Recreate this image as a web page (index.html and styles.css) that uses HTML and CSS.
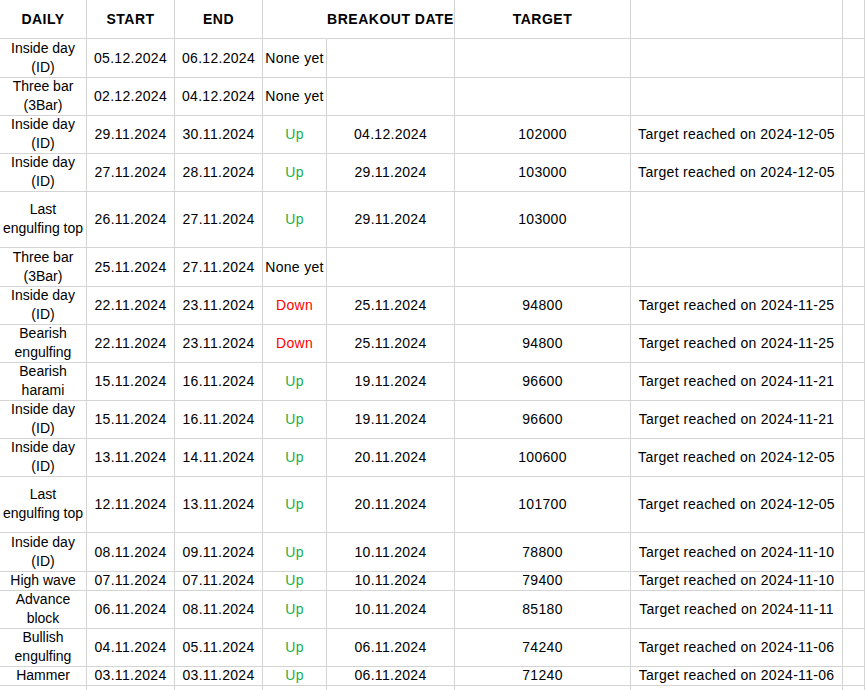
FILE: index.html
```html
<!DOCTYPE html>
<html>
<head>
<meta charset="utf-8">
<link rel="stylesheet" href="styles.css">
</head>
<body>
<div class="sheet">
  <div class="row head">
    <div class="c">DAILY</div>
    <div class="c">START</div>
    <div class="c">END</div>
    <div class="c nob"></div>
    <div class="c over">BREAKOUT DATE</div>
    <div class="c">TARGET</div>
    <div class="c"></div>
    <div class="c"></div>
  </div>

  <div class="row">
    <div class="c">Inside day (ID)</div><div class="c">05.12.2024</div><div class="c">06.12.2024</div><div class="c">None yet</div><div class="c"></div><div class="c"></div><div class="c"></div><div class="c"></div>
  </div>
  <div class="row">
    <div class="c">Three bar (3Bar)</div><div class="c">02.12.2024</div><div class="c">04.12.2024</div><div class="c">None yet</div><div class="c"></div><div class="c"></div><div class="c"></div><div class="c"></div>
  </div>
  <div class="row">
    <div class="c">Inside day (ID)</div><div class="c">29.11.2024</div><div class="c">30.11.2024</div><div class="c up">Up</div><div class="c">04.12.2024</div><div class="c">102000</div><div class="c">Target reached on 2024-12-05</div><div class="c"></div>
  </div>
  <div class="row">
    <div class="c">Inside day (ID)</div><div class="c">27.11.2024</div><div class="c">28.11.2024</div><div class="c up">Up</div><div class="c">29.11.2024</div><div class="c">103000</div><div class="c">Target reached on 2024-12-05</div><div class="c"></div>
  </div>
  <div class="row tall">
    <div class="c">Last engulfing top</div><div class="c">26.11.2024</div><div class="c">27.11.2024</div><div class="c up">Up</div><div class="c">29.11.2024</div><div class="c">103000</div><div class="c"></div><div class="c"></div>
  </div>
  <div class="row">
    <div class="c">Three bar (3Bar)</div><div class="c">25.11.2024</div><div class="c">27.11.2024</div><div class="c">None yet</div><div class="c"></div><div class="c"></div><div class="c"></div><div class="c"></div>
  </div>
  <div class="row">
    <div class="c">Inside day (ID)</div><div class="c">22.11.2024</div><div class="c">23.11.2024</div><div class="c down">Down</div><div class="c">25.11.2024</div><div class="c">94800</div><div class="c">Target reached on 2024-11-25</div><div class="c"></div>
  </div>
  <div class="row">
    <div class="c">Bearish engulfing</div><div class="c">22.11.2024</div><div class="c">23.11.2024</div><div class="c down">Down</div><div class="c">25.11.2024</div><div class="c">94800</div><div class="c">Target reached on 2024-11-25</div><div class="c"></div>
  </div>
  <div class="row">
    <div class="c">Bearish harami</div><div class="c">15.11.2024</div><div class="c">16.11.2024</div><div class="c up">Up</div><div class="c">19.11.2024</div><div class="c">96600</div><div class="c">Target reached on 2024-11-21</div><div class="c"></div>
  </div>
  <div class="row">
    <div class="c">Inside day (ID)</div><div class="c">15.11.2024</div><div class="c">16.11.2024</div><div class="c up">Up</div><div class="c">19.11.2024</div><div class="c">96600</div><div class="c">Target reached on 2024-11-21</div><div class="c"></div>
  </div>
  <div class="row">
    <div class="c">Inside day (ID)</div><div class="c">13.11.2024</div><div class="c">14.11.2024</div><div class="c up">Up</div><div class="c">20.11.2024</div><div class="c">100600</div><div class="c">Target reached on 2024-12-05</div><div class="c"></div>
  </div>
  <div class="row tall">
    <div class="c">Last engulfing top</div><div class="c">12.11.2024</div><div class="c">13.11.2024</div><div class="c up">Up</div><div class="c">20.11.2024</div><div class="c">101700</div><div class="c">Target reached on 2024-12-05</div><div class="c"></div>
  </div>
  <div class="row">
    <div class="c">Inside day (ID)</div><div class="c">08.11.2024</div><div class="c">09.11.2024</div><div class="c up">Up</div><div class="c">10.11.2024</div><div class="c">78800</div><div class="c">Target reached on 2024-11-10</div><div class="c"></div>
  </div>
  <div class="row short">
    <div class="c">High wave</div><div class="c">07.11.2024</div><div class="c">07.11.2024</div><div class="c up">Up</div><div class="c">10.11.2024</div><div class="c">79400</div><div class="c">Target reached on 2024-11-10</div><div class="c"></div>
  </div>
  <div class="row">
    <div class="c">Advance block</div><div class="c">06.11.2024</div><div class="c">08.11.2024</div><div class="c up">Up</div><div class="c">10.11.2024</div><div class="c">85180</div><div class="c">Target reached on 2024-11-11</div><div class="c"></div>
  </div>
  <div class="row">
    <div class="c">Bullish engulfing</div><div class="c">04.11.2024</div><div class="c">05.11.2024</div><div class="c up">Up</div><div class="c">06.11.2024</div><div class="c">74240</div><div class="c">Target reached on 2024-11-06</div><div class="c"></div>
  </div>
  <div class="row short">
    <div class="c">Hammer</div><div class="c">03.11.2024</div><div class="c">03.11.2024</div><div class="c up">Up</div><div class="c">06.11.2024</div><div class="c">71240</div><div class="c">Target reached on 2024-11-06</div><div class="c"></div>
  </div>
  <div class="row">
    <div class="c"></div><div class="c"></div><div class="c"></div><div class="c"></div><div class="c"></div><div class="c"></div><div class="c"></div><div class="c"></div>
  </div>
</div>
</body>
</html>
```

FILE: styles.css
```css
html, body {
  margin: 0;
  padding: 0;
  background: #ffffff;
  overflow: hidden;
}
body {
  font-family: "Liberation Sans", Arial, sans-serif;
  font-size: 14px;
  line-height: 19px;
  color: #000000;
}
.sheet {
  width: 865px;
  height: 690px;
  overflow: hidden;
}
.row {
  display: grid;
  grid-template-columns: 87px 88px 88px 64px 128px 176px 212px 1fr;
  height: 38px;
  letter-spacing: 0.3px;
}
.row.head {
  height: 39px;
  font-weight: bold;
  letter-spacing: 0.5px;
}
.row.tall {
  height: 57px;
}
.row.short {
  height: 19px;
}
.c {
  box-sizing: border-box;
  border-right: 1px solid #d4d4d4;
  border-bottom: 1px solid #d4d4d4;
  display: flex;
  align-items: center;
  justify-content: center;
  text-align: center;
  padding: 0 1px;
  min-width: 0;
}
.row .c:first-child {
  letter-spacing: 0;
}
.row.head .c:first-child {
  letter-spacing: 0.5px;
}
.c.nob {
  border-right-color: transparent;
}
.c.over {
  white-space: nowrap;
  overflow: visible;
}
.up {
  color: #16b04a;
}
.down {
  color: #ff0000;
}
```
